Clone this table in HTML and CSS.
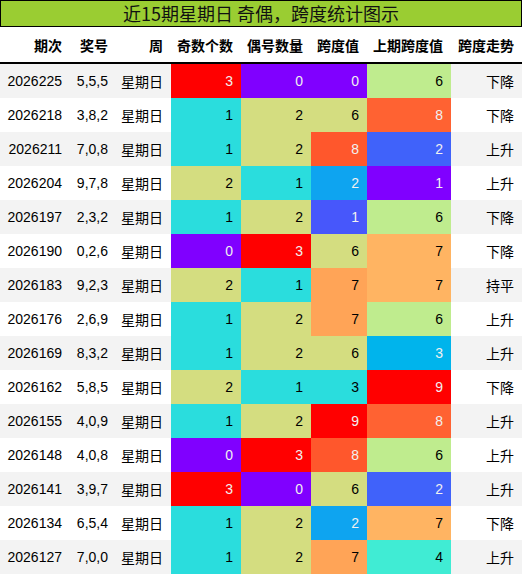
FILE: index.html
```html
<!DOCTYPE html>
<html lang="zh">
<head>
<meta charset="utf-8">
<title>近15期星期日 奇偶，跨度统计图示</title>
<link rel="stylesheet" href="styles.css">
</head>
<body>
<div class="title">近15期星期日 奇偶，跨度统计图示</div>
<table class="stats">
  <colgroup>
    <col class="c1"><col class="c2"><col class="c3"><col class="c4"><col class="c5"><col class="c6"><col class="c7"><col class="c8">
  </colgroup>
  <thead>
    <tr><th>期次</th><th>奖号</th><th>周</th><th>奇数个数</th><th>偶号数量</th><th>跨度值</th><th>上期跨度值</th><th>跨度走势</th></tr>
  </thead>
  <tbody>
    <tr><td>2026225</td><td>5,5,5</td><td>星期日</td><td class="k3">3</td><td class="k0">0</td><td class="s0">0</td><td class="p6">6</td><td>下降</td></tr>
    <tr><td>2026218</td><td>3,8,2</td><td>星期日</td><td class="k1">1</td><td class="k2">2</td><td class="s6">6</td><td class="p8">8</td><td>下降</td></tr>
    <tr><td>2026211</td><td>7,0,8</td><td>星期日</td><td class="k1">1</td><td class="k2">2</td><td class="s8">8</td><td class="p2">2</td><td>上升</td></tr>
    <tr><td>2026204</td><td>9,7,8</td><td>星期日</td><td class="k2">2</td><td class="k1">1</td><td class="s2">2</td><td class="p1">1</td><td>上升</td></tr>
    <tr><td>2026197</td><td>2,3,2</td><td>星期日</td><td class="k1">1</td><td class="k2">2</td><td class="s1">1</td><td class="p6">6</td><td>下降</td></tr>
    <tr><td>2026190</td><td>0,2,6</td><td>星期日</td><td class="k0">0</td><td class="k3">3</td><td class="s6">6</td><td class="p7">7</td><td>下降</td></tr>
    <tr><td>2026183</td><td>9,2,3</td><td>星期日</td><td class="k2">2</td><td class="k1">1</td><td class="s7">7</td><td class="p7">7</td><td>持平</td></tr>
    <tr><td>2026176</td><td>2,6,9</td><td>星期日</td><td class="k1">1</td><td class="k2">2</td><td class="s7">7</td><td class="p6">6</td><td>上升</td></tr>
    <tr><td>2026169</td><td>8,3,2</td><td>星期日</td><td class="k1">1</td><td class="k2">2</td><td class="s6">6</td><td class="p3">3</td><td>上升</td></tr>
    <tr><td>2026162</td><td>5,8,5</td><td>星期日</td><td class="k2">2</td><td class="k1">1</td><td class="s3">3</td><td class="p9">9</td><td>下降</td></tr>
    <tr><td>2026155</td><td>4,0,9</td><td>星期日</td><td class="k1">1</td><td class="k2">2</td><td class="s9">9</td><td class="p8">8</td><td>上升</td></tr>
    <tr><td>2026148</td><td>4,0,8</td><td>星期日</td><td class="k0">0</td><td class="k3">3</td><td class="s8">8</td><td class="p6">6</td><td>上升</td></tr>
    <tr><td>2026141</td><td>3,9,7</td><td>星期日</td><td class="k3">3</td><td class="k0">0</td><td class="s6">6</td><td class="p2">2</td><td>上升</td></tr>
    <tr><td>2026134</td><td>6,5,4</td><td>星期日</td><td class="k1">1</td><td class="k2">2</td><td class="s2">2</td><td class="p7">7</td><td>下降</td></tr>
    <tr><td>2026127</td><td>7,0,0</td><td>星期日</td><td class="k1">1</td><td class="k2">2</td><td class="s7">7</td><td class="p4">4</td><td>上升</td></tr>
  </tbody>
</table>
</body>
</html>
```
FILE: styles.css
```css
html, body {
  margin: 0;
  padding: 0;
  background: #ffffff;
}
body {
  width: 522px;
  font-family: "Liberation Sans", "Noto Sans CJK SC", sans-serif;
  font-size: 14px;
  color: #000000;
}
.title {
  box-sizing: border-box;
  height: 27px;
  border: 1px solid #000000;
  background: #9acd32;
  font-family: "Noto Sans CJK SC", sans-serif;
  font-size: 18px;
  line-height: 24px;
  text-align: center;
  color: #111111;
}
.stats {
  width: 522px;
  border-collapse: collapse;
  table-layout: fixed;
}
.c1 { width: 70px; }
.c2 { width: 46px; }
.c3 { width: 55px; }
.c4 { width: 70px; }
.c5 { width: 70px; }
.c6 { width: 56px; }
.c7 { width: 84px; }
.c8 { width: 71px; }
.stats th {
  height: 35px;
  padding: 0 8px 0 0;
  text-align: right;
  font-weight: bold;
  border-bottom: 2px solid #000000;
  font-family: "Liberation Sans", "Noto Sans CJK SC", sans-serif;
  white-space: nowrap;
}
.stats td {
  height: 34px;
  padding: 0 8px 0 0;
  text-align: right;
  white-space: nowrap;
}
.stats tbody tr:nth-child(odd) { background: #f3f3f3; }
.stats tbody tr:nth-child(even) { background: #ffffff; }

/* odd/even counts, range 0-3 (rainbow colormap) */
.k0 { background: #8000ff; color: #f1f1f1; }
.k1 { background: #2adddd; color: #000000; }
.k2 { background: #d4dd80; color: #000000; }
.k3 { background: #ff0000; color: #f1f1f1; }

/* span value, range 0-9 */
.s0 { background: #8000ff; color: #f1f1f1; }
.s1 { background: #4757fb; color: #f1f1f1; }
.s2 { background: #0ea4f0; color: #f1f1f1; }
.s3 { background: #2adddd; color: #000000; }
.s6 { background: #d4dd80; color: #000000; }
.s7 { background: #ffa457; color: #000000; }
.s8 { background: #ff572c; color: #f1f1f1; }
.s9 { background: #ff0000; color: #f1f1f1; }

/* previous span value, range 1-9 */
.p1 { background: #8000ff; color: #f1f1f1; }
.p2 { background: #4062fa; color: #f1f1f1; }
.p3 { background: #00b4ec; color: #f1f1f1; }
.p4 { background: #40ecd4; color: #000000; }
.p6 { background: #bfec8e; color: #000000; }
.p7 { background: #ffb462; color: #000000; }
.p8 { background: #ff6232; color: #f1f1f1; }
.p9 { background: #ff0000; color: #f1f1f1; }
```
